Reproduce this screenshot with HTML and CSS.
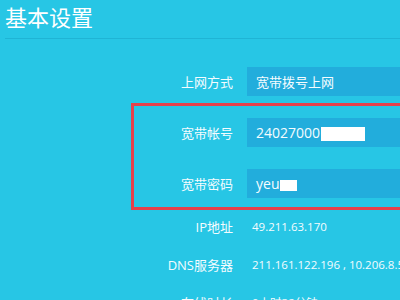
FILE: index.html
```html
<!DOCTYPE html>
<html lang="zh-CN">
<head>
<meta charset="utf-8">
<title>基本设置</title>
<link rel="stylesheet" href="styles.css">
</head>
<body>
  <header class="head"><h1 class="title">基本设置</h1></header>
  <main class="form">
    <div class="fields">
      <div class="row field"><span class="label">上网方式</span><div class="input"><span class="text-cn">宽带拨号上网</span></div></div>
      <div class="row field"><span class="label">宽带帐号</span><div class="input"><span class="text-num">24027000</span><span class="mask mask-acc"></span></div></div>
      <div class="row field"><span class="label">宽带密码</span><div class="input"><span class="text-num">yeu</span><span class="mask mask-pwd"></span></div></div>
    </div>
    <div class="infos">
      <div class="row info"><span class="label">IP地址</span><span class="value">49.211.63.170</span></div>
      <div class="row info"><span class="label">DNS服务器</span><span class="value">211.161.122.196 , 10.206.8.5</span></div>
      <div class="row info"><span class="label">在线时长</span><span class="value">0小时32分钟</span></div>
    </div>
  </main>
  <div class="highlight"></div>
</body>
</html>
```
FILE: styles.css
```css
html, body {
  margin: 0;
  overflow: hidden;
}
body {
  width: 400px;
  height: 300px;
  background: #27c6e5;
  color: #f4fcff;
  font-family: "Open Sans", "Noto Sans CJK SC", sans-serif;
}
.head {
  margin-left: 5px;
  padding: 5px 0 11px;
  border-bottom: 1px solid #1fb4d5;
}
.title {
  margin: 0;
  font: 400 22px/22px "Noto Sans CJK SC", sans-serif;
  color: #ffffff;
}
.form {
  padding-top: 28px;
}
.fields {
  display: flex;
  flex-direction: column;
  gap: 22px;
}
.infos {
  margin-top: 9px;
}
.row {
  display: flex;
  align-items: center;
  gap: 14px;
  white-space: nowrap;
}
.field {
  height: 29px;
}
.info {
  height: 38px;
}
.label {
  flex: none;
  width: 233px;
  text-align: right;
  font-size: 13px;
  font-family: "Open Sans", "Noto Sans CJK SC", sans-serif;
}
.input {
  flex: none;
  width: 200px;
  height: 29px;
  box-sizing: border-box;
  padding-left: 9px;
  display: flex;
  align-items: center;
  background: #22addc;
}
.text-cn {
  font-size: 13px;
}
.text-num {
  font-size: 14px;
}
.mask {
  display: block;
  background: #ffffff;
}
.mask-acc {
  width: 44px;
  height: 14px;
  margin: 3px 0 0 1px;
}
.mask-pwd {
  width: 17px;
  height: 11px;
  margin: 3px 0 0 1px;
}
.value {
  padding-left: 5px;
  font-size: 11.5px;
}
.highlight {
  position: absolute;
  left: 131px;
  top: 103px;
  width: 320px;
  height: 107px;
  box-sizing: border-box;
  border: 3px solid #e6414a;
}
```
